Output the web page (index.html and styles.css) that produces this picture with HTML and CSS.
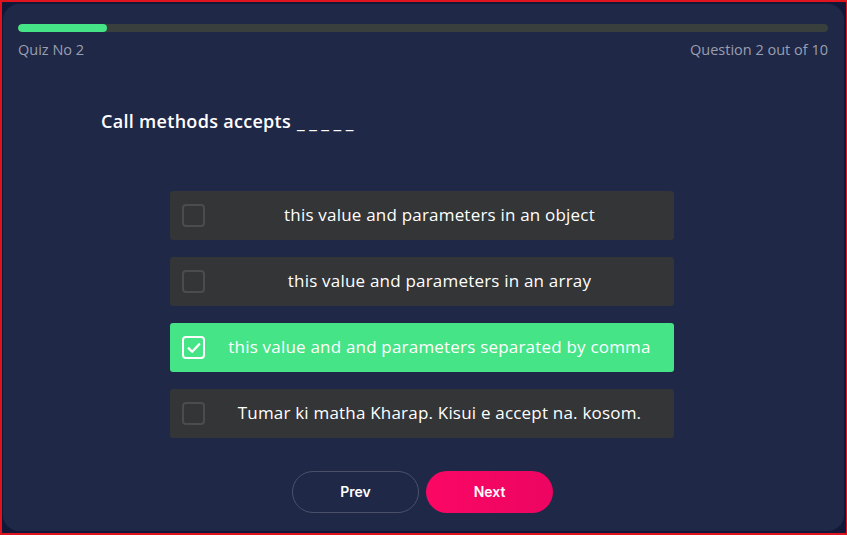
FILE: index.html
```html
<!DOCTYPE html>
<html>
<head>
<meta charset="utf-8">
<link rel="stylesheet" href="styles.css">
</head>
<body>
<div class="frame">
  <div class="card">
    <div class="progress"><div class="fill" style="width:11%"></div></div>
    <div class="meta">
      <span>Quiz No 2</span>
      <span>Question 2 out of 10</span>
    </div>
    <h1 class="question">Call methods accepts <span class="blank">_____</span></h1>
    <div class="options">
      <div class="option"><span class="box"></span><span class="label">this value and parameters in an object</span></div>
      <div class="option"><span class="box"></span><span class="label">this value and parameters in an array</span></div>
      <div class="option selected"><span class="box"><svg viewBox="0 0 24 24" width="18" height="18"><path d="M5 12.5l4.5 4.5L19 7" fill="none" stroke="#fff" stroke-width="3.2" stroke-linecap="round" stroke-linejoin="round"/></svg></span><span class="label">this value and and parameters separated by comma</span></div>
      <div class="option"><span class="box"></span><span class="label">Tumar ki matha Kharap. Kisui e accept na. kosom.</span></div>
    </div>
    <div class="buttons">
      <button class="btn prev">Prev</button>
      <button class="btn next">Next</button>
    </div>
  </div>
</div>
</body>
</html>
```
FILE: styles.css
```css
* { box-sizing: border-box; }
html, body { margin: 0; padding: 0; }
body {
  width: 847px;
  height: 535px;
  font-family: "Open Sans", "Noto Sans", sans-serif;
  background: #131736;
}
.frame {
  width: 847px;
  height: 535px;
  border: 2px solid #e0141e;
  border-right-width: 1px;
  padding: 2px 2px 2px 1px;
  background: #141838;
}
.card {
  height: 100%;
  background: #1f2847;
  border-radius: 16px;
  padding: 20px 16px 0 15px;
  display: flex;
  flex-direction: column;
}
.progress {
  height: 8px;
  background: #393f3d;
  border-radius: 4px;
  overflow: hidden;
}
.fill {
  height: 100%;
  background: #45e486;
  border-radius: 4px;
}
.meta {
  display: flex;
  justify-content: space-between;
  color: #9a9fb0;
  font-size: 14.5px;
  line-height: 20px;
  margin-top: 8px;
  letter-spacing: 0;
}
.question {
  color: #fff;
  font-size: 18px;
  line-height: 24px;
  font-weight: 600;
  margin: 49px 0 0 83px;
  letter-spacing: 0.3px;
}
.blank {
  letter-spacing: 4.5px;
  margin-left: 1px;
}
.options {
  display: flex;
  flex-direction: column;
  gap: 17px;
  width: 504px;
  margin: 58px 0 0 152px;
}
.option {
  height: 49px;
  background: #333536;
  border-radius: 3px;
  display: flex;
  align-items: center;
  padding-left: 12px;
  padding-bottom: 2px;
}
.box {
  width: 23px;
  height: 23px;
  border: 2px solid #4a4d4e;
  border-radius: 4px;
  flex: none;
  display: flex;
  align-items: center;
  justify-content: center;
  margin-top: 2px;
}
.label {
  flex: 1;
  text-align: center;
  color: #fff;
  font-size: 17px;
  letter-spacing: 0.2px;
}
.option.selected { background: #45e486; }
.option.selected .box { border-color: #fff; }
.buttons {
  display: flex;
  gap: 7px;
  margin: 33px 0 0 274px;
}
.btn {
  width: 127px;
  height: 42px;
  border-radius: 21px;
  font-family: "Inter", sans-serif;
  font-size: 14px;
  font-weight: 600;
  color: #fff;
  cursor: pointer;
  padding-bottom: 2px;
}
.prev {
  background: transparent;
  border: 1px solid #4a5068;
}
.next {
  background: linear-gradient(90deg, #fb0764, #ec0561);
  border: none;
}
```
